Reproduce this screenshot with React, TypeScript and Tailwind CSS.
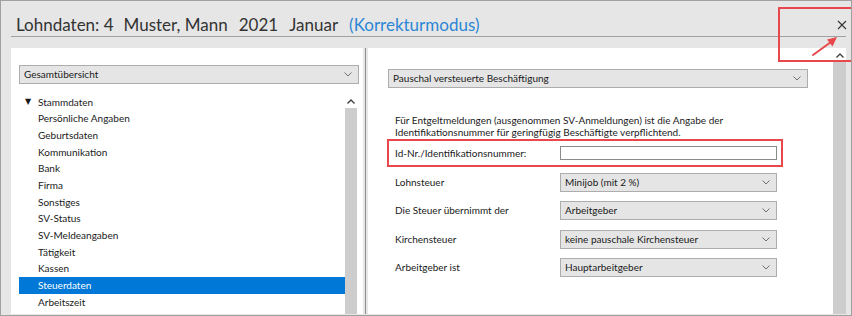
import React from "react";

const TREE = [
  "Persönliche Angaben",
  "Geburtsdaten",
  "Kommunikation",
  "Bank",
  "Firma",
  "Sonstiges",
  "SV-Status",
  "SV-Meldeangaben",
  "Tätigkeit",
  "Kassen",
  "Steuerdaten",
  "Arbeitszeit",
];

const ROWS = [
  { label: "Lohnsteuer", value: "Minijob (mit 2 %)", mt: "mt-[6px]" },
  { label: "Die Steuer übernimmt der", value: "Arbeitgeber", mt: "mt-[9px]" },
  { label: "Kirchensteuer", value: "keine pauschale Kirchensteuer", mt: "mt-[10px]" },
  { label: "Arbeitgeber ist", value: "Hauptarbeitgeber", mt: "mt-[9px]" },
];

function ChevronDown() {
  return (
    <svg width="8" height="5" viewBox="0 0 8 5" fill="none">
      <path d="M0.5 0.5 L4 4 L7.5 0.5" stroke="#707070" strokeWidth="1" />
    </svg>
  );
}

function ChevronUp() {
  return (
    <svg width="8" height="5" viewBox="0 0 8 5" fill="none">
      <path d="M0.5 4.5 L4 1 L7.5 4.5" stroke="#404040" strokeWidth="1.4" />
    </svg>
  );
}

function Select({ value, className }: { value: string; className: string }) {
  return (
    <div
      className={`flex h-[19px] items-center justify-between border border-[#adadad] bg-[#e5e5e5] pl-[4px] pr-[6px] text-[10px] text-[#1a1a1a] ${className}`}
    >
      <span>{value}</span>
      <ChevronDown />
    </div>
  );
}

export default function App() {
  return (
    <div className="relative h-[316px] w-[852px] overflow-hidden border border-[#a0a0a0] bg-[#e6e6e6] font-['Lato','Noto_Sans',sans-serif]">
      {/* title */}
      <div className="ml-[10px] mr-[5px] flex h-[36px] items-center border-b border-[#a0a0a0] pl-[5px] pt-[12px] text-[17px] text-[#333333]">
        <span>Lohndaten: 4</span>
        <span className="ml-[10px]">Muster, Mann</span>
        <span className="ml-[11px]">2021</span>
        <span className="ml-[11px]">Januar</span>
        <span className="ml-[11px] text-[#2b87d6]">(Korrekturmodus)</span>
      </div>

      <div className="ml-[10px] mr-[5px] mt-[11px] flex h-[266px]">
        {/* left panel */}
        <div className="flex w-[352px] flex-col bg-white pl-[8px] pr-[6px] pt-[17px]">
          <Select value="Gesamtübersicht" className="w-[340px]" />
          <div className="mt-[10px] flex flex-1">
            <div className="w-[326px] text-[10px] text-[#1a1a1a]">
              <div className="flex h-[16.67px] items-center pl-[6px]">
                <span className="w-[13px] font-['DejaVu_Sans',sans-serif] text-[8px]">▼</span>
                <span>Stammdaten</span>
              </div>
              {TREE.map((t) => (
                <div
                  key={t}
                  className={`flex h-[16.67px] items-center pl-[19px] ${
                    t === "Steuerdaten" ? "bg-[#0078d7] text-white" : ""
                  }`}
                >
                  {t}
                </div>
              ))}
            </div>
            <div className="flex w-[12px] flex-col">
              <div className="flex h-[14px] items-center justify-center">
                <ChevronUp />
              </div>
              <div className="flex-1 bg-[#cdcdcd]" />
            </div>
          </div>
        </div>

        {/* divider */}
        <div className="flex w-[5px] justify-center">
          <div className="w-[1px] bg-[#8f8f8f]" />
        </div>

        {/* right panel */}
        <div className="flex flex-1 bg-white">
          <div className="flex-1 pt-[21px] text-[10px] text-[#1a1a1a]">
            <Select value="Pauschal versteuerte Beschäftigung" className="ml-[20px] w-[420px] pr-[4px]" />
            <p className="ml-[27px] mt-[26px] leading-[12px]">
              Für Entgeltmeldungen (ausgenommen SV-Anmeldungen) ist die Angabe der
              <br />
              Identifikationsnummer für geringfügig Beschäftigte verpflichtend.
            </p>
            <div className="ml-[19px] mt-[1px] flex h-[28px] w-[396px] items-center border-2 border-[#e8474c] pl-[6px]">
              <span className="w-[165px]">Id-Nr./Identifikationsnummer:</span>
              <div className="h-[14px] w-[217px] border border-[#8a8a8a] bg-white" />
            </div>
            {ROWS.map((r) => (
              <div key={r.label} className={`ml-[27px] flex items-center ${r.mt}`}>
                <span className="w-[165px]">{r.label}</span>
                <Select value={r.value} className="w-[217px]" />
              </div>
            ))}
          </div>
          <div className="flex w-[13px] flex-col">
            <div className="flex h-[14px] items-center justify-center">
              <ChevronUp />
            </div>
            <div className="flex-1 bg-[#cdcdcd]" />
          </div>
        </div>
      </div>

      {/* close button */}
      <svg className="absolute left-[836px] top-[19px]" width="10" height="10" viewBox="0 0 10 10">
        <path d="M1 1 L9 9 M9 1 L1 9" stroke="#333" strokeWidth="1.1" />
      </svg>

      {/* annotation */}
      <div className="absolute left-[777px] top-[6px] h-[55px] w-[75px] border-2 border-[#e8474c]" />
      <svg className="absolute left-[808px] top-[32px]" width="32" height="26" viewBox="0 0 32 26">
        <path d="M4 22 L22 9" stroke="#e8474c" strokeWidth="2" strokeLinecap="round" />
        <path d="M28 4 L18 6.5 L23.5 13.5 Z" fill="#e8474c" />
      </svg>
    </div>
  );
}
